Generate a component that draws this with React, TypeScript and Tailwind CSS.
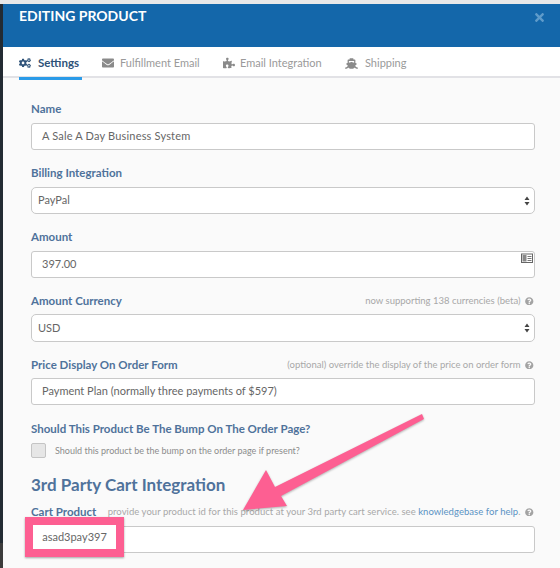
import { FaCogs, FaEnvelope, FaPuzzlePiece, FaShip, FaQuestionCircle, FaTimes } from "react-icons/fa";

function Help() {
  return <FaQuestionCircle className="ml-[4.5px] mr-[1.5px] text-[#a3a3a3]" size={8.5} />;
}

function Label({ text, hint, link, low }: { text: string; hint?: string; link?: boolean; low?: boolean }) {
  return (
    <div className={`flex h-4 mb-[6px] items-center justify-between ${low ? "pt-[2px]" : ""}`}>
      <span className="text-[11.5px] font-bold text-[#4f729b] whitespace-nowrap">{text}</span>
      {hint && (
        <span
          className={`flex items-center text-[9.5px] text-[#a8a8a8] whitespace-nowrap ${
            link ? "tracking-[0.04px]" : ""
          }`}
        >
          {hint}
          {link && (
            <>
              &nbsp;<span className="text-[#5a93c4]">knowledgebase for help</span>.
            </>
          )}
          <Help />
        </span>
      )}
    </div>
  );
}

function Input({ value, icon, wide }: { value: string; icon?: boolean; wide?: boolean }) {
  return (
    <div
      className={`relative flex h-[27px] items-center rounded-[3px] border border-[#c9c9c9] bg-white pl-[10px] text-[11px] text-[#666666] ${
        wide ? "tracking-[0.18px]" : ""
      }`}
    >
      {value}
      {icon && (
        <svg className="absolute right-[1px] top-[1px]" width="12" height="11" viewBox="0 0 12 11">
          <rect x="0.5" y="1" width="11" height="8.5" fill="#fff" stroke="#666" />
          <rect x="1.5" y="2" width="4" height="6.5" fill="#888" />
          <path d="M6.5 3.5h4M6.5 5.5h4M6.5 7.5h4" stroke="#777" />
        </svg>
      )}
    </div>
  );
}

function Select({ value, tall }: { value: string; tall?: boolean }) {
  return (
    <div
      className={`relative flex items-center rounded-[5px] border border-[#c9c9c9] bg-white pl-[6px] text-[11px] text-[#666666] ${
        tall ? "h-[28px]" : "h-[27px]"
      }`}
    >
      {value}
      <svg className="absolute right-[4px] top-1/2 -translate-y-1/2" width="6" height="10" viewBox="0 0 6 10">
        <path d="M3 0.5L5.5 4H0.5z M3 9.5L0.5 6h5z" fill="#444" />
      </svg>
    </div>
  );
}

function Tab({
  icon,
  label,
  active,
  className,
}: {
  icon: React.ReactNode;
  label: string;
  active?: boolean;
  className: string;
}) {
  return (
    <div
      className={`flex h-[33px] items-center border-b-[3px] pt-[2px] ${
        active
          ? "border-[#2b9be8] text-[11.5px] font-bold text-[#2e5278]"
          : "border-transparent text-[11px] text-[#9a9a9a]"
      } ${className}`}
    >
      {icon}
      <span className="whitespace-nowrap">{label}</span>
    </div>
  );
}

export default function App() {
  return (
    <div className="relative h-[568px] w-[560px] overflow-hidden bg-[#fafafa] font-['Lato',sans-serif]">
      <div className="h-1 bg-[#e8e8e8]" />
      <div className="flex h-[564px]">
        <div className="flex w-[3px] shrink-0 flex-col bg-[#232b33]">
          <div className="flex-1" />
          <div className="h-[25px] bg-[#3c3c3c]" />
        </div>
        <div className="min-w-0 flex-1">
          <div className="flex h-[43px] items-start justify-between bg-[#1467aa] pl-4 pr-[14px] text-white">
            <h1 className="mt-[4px] text-[14px] font-bold leading-4">EDITING PRODUCT</h1>
            <FaTimes className="mt-[7px] text-[#5f9bca]" size={13} />
          </div>
          <div className="flex h-[31px] border-b-[2px] border-[#e2e2e6] bg-white pl-4">
            <Tab
              active
              className="w-[63px] mr-[20px]"
              label="Settings"
              icon={<FaCogs className="ml-0 mr-[7px] text-[#2e5278]" size={12} />}
            />
            <Tab
              className="w-[98px] mr-[23px]"
              label="Fulfillment Email"
              icon={<FaEnvelope className="mr-[6px] text-[#8a8a8a]" size={12} />}
            />
            <Tab
              className="w-[99px] mr-[23px]"
              label="Email Integration"
              icon={<FaPuzzlePiece className="mr-[5px] text-[#8a8a8a]" size={12} />}
            />
            <Tab
              className="w-[63px]"
              label="Shipping"
              icon={<FaShip className="mr-[7px] text-[#8a8a8a]" size={13} />}
            />
          </div>
          <div className="flex flex-col gap-[15px] pl-7 pr-[25px] pt-[23px]">
            <div>
              <Label text="Name" />
              <Input value="A Sale A Day Business System" wide />
            </div>
            <div>
              <Label text="Billing Integration" />
              <Select value="PayPal" />
            </div>
            <div>
              <Label text="Amount" />
              <Input value="397.00" icon />
            </div>
            <div className="-mt-[1px]">
              <Label low text="Amount Currency" hint="now supporting 138 currencies (beta)" />
              <Select value="USD" tall />
            </div>
            <div className="-mt-[1px]">
              <Label low text="Price Display On Order Form" hint="(optional) override the display of the price on order form" />
              <Input value="Payment Plan (normally three payments of $597)" />
            </div>
            <div>
              <div className="flex h-4 items-center pt-[2px] text-[11.5px] font-bold text-[#4f729b]">
                Should This Product Be The Bump On The Order Page?
              </div>
              <div className="mt-[7px] flex items-center">
                <div className="h-[15px] w-[15px] rounded-[2px] border border-[#c4c4c4] bg-[#e6e6e6]" />
                <span className="ml-[9px] text-[9px] text-[#8c8c8c]">
                  Should this product be the bump on the order page if present?
                </span>
              </div>
              <h2 className="mt-[15px] text-[17px] font-bold leading-6 text-[#4f729b]">3rd Party Cart Integration</h2>
              <div className="mt-[7px]">
                <Label
                  text="Cart Product"
                  hint="provide your product id for this product at your 3rd party cart service. see"
                  link
                />
                <Input value="" />
              </div>
            </div>
          </div>
        </div>
      </div>

      <div className="absolute left-[25px] top-[517px] flex h-[40px] w-[99px] items-center justify-center border-[8px] border-[#fd5f92] bg-white pt-[1px] text-[11px] text-[#666666] shadow-[0_1px_2px_rgba(0,0,0,0.35)]">
        asad3pay397
      </div>
      <svg className="absolute left-0 top-0" width="560" height="568" viewBox="0 0 560 568">
        <polygon
          points="243,510 266,470 275,487 422,414 424,419 281,496 287,506"
          fill="#fd5f92"
          style={{ filter: "drop-shadow(0 1px 1px rgba(0,0,0,0.3))" }}
        />
      </svg>
    </div>
  );
}
